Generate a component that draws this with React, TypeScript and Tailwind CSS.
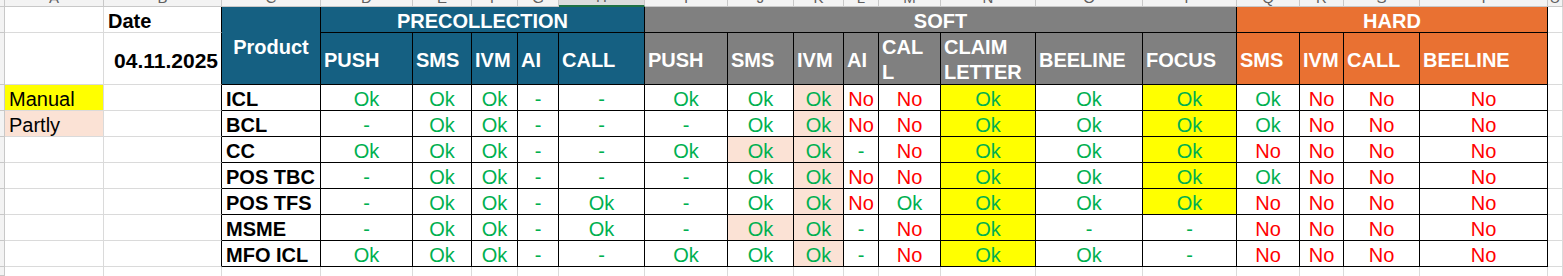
const letters = "ABCDEFGHIJKLMNOPQRSTU".split("");

type Row = { name: string; cells: string[] };

const rows: Row[] = [
  { name: "ICL", cells: ["Ok", "Ok", "Ok", "-", "-", "Ok", "Ok", "Ok", "No", "No", "Ok", "Ok", "Ok", "Ok", "No", "No", "No"] },
  { name: "BCL", cells: ["-", "Ok", "Ok", "-", "-", "-", "Ok", "Ok", "No", "No", "Ok", "Ok", "Ok", "Ok", "No", "No", "No"] },
  { name: "CC", cells: ["Ok", "Ok", "Ok", "-", "-", "Ok", "Ok", "Ok", "-", "No", "Ok", "Ok", "Ok", "No", "No", "No", "No"] },
  { name: "POS TBC", cells: ["-", "Ok", "Ok", "-", "-", "-", "Ok", "Ok", "No", "No", "Ok", "Ok", "Ok", "Ok", "No", "No", "No"] },
  { name: "POS TFS", cells: ["-", "Ok", "Ok", "-", "Ok", "-", "Ok", "Ok", "No", "Ok", "Ok", "Ok", "Ok", "No", "No", "No", "No"] },
  { name: "MSME", cells: ["-", "Ok", "Ok", "-", "Ok", "-", "Ok", "Ok", "-", "No", "Ok", "-", "-", "No", "No", "No", "No"] },
  { name: "MFO ICL", cells: ["Ok", "Ok", "Ok", "-", "-", "Ok", "Ok", "Ok", "-", "No", "Ok", "Ok", "-", "No", "No", "No", "No"] },
];

// sub headers under PRECOLLECTION / SOFT / HARD
const subHeaders: { label: string[]; bg: string }[] = [
  { label: ["PUSH"], bg: "bg-[#156082]" },
  { label: ["SMS"], bg: "bg-[#156082]" },
  { label: ["IVM"], bg: "bg-[#156082]" },
  { label: ["AI"], bg: "bg-[#156082]" },
  { label: ["CALL"], bg: "bg-[#156082]" },
  { label: ["PUSH"], bg: "bg-[#808080]" },
  { label: ["SMS"], bg: "bg-[#808080]" },
  { label: ["IVM"], bg: "bg-[#808080]" },
  { label: ["AI"], bg: "bg-[#808080]" },
  { label: ["CAL", "L"], bg: "bg-[#808080]" },
  { label: ["CLAIM", "LETTER"], bg: "bg-[#808080]" },
  { label: ["BEELINE"], bg: "bg-[#808080]" },
  { label: ["FOCUS"], bg: "bg-[#808080]" },
  { label: ["SMS"], bg: "bg-[#e97132]" },
  { label: ["IVM"], bg: "bg-[#e97132]" },
  { label: ["CALL"], bg: "bg-[#e97132]" },
  { label: ["BEELINE"], bg: "bg-[#e97132]" },
];

const grid = "border-r border-b border-r-[#dadada] border-b-[#dadada]";
const black = "border-r border-b border-r-black border-b-black";
const blackRight = "border-r border-b border-r-black border-b-[#dadada]";
const rowHead = "border-r border-b border-r-[#c8c8c8] border-b-[#c8c8c8] bg-[#f3f3f3]";

const cellBg = (rowIdx: number, colIdx: number, value: string) => {
  if (colIdx === 7) return "bg-[#fbe2d5]";
  if (colIdx === 6 && (rowIdx === 2 || rowIdx === 5)) return "bg-[#fbe2d5]";
  if (colIdx === 10) return "bg-[#ffff00]";
  if (colIdx === 12 && value === "Ok") return "bg-[#ffff00]";
  return "bg-white";
};

const App = () => {
  return (
    <div className="w-[1563px] h-[276px] overflow-hidden bg-white font-['Liberation_Sans',Arial,sans-serif] text-[20px] text-black">
      <div className="grid grid-cols-[5px_99px_118px_99px_92px_59px_46px_41px_86px_83px_66px_50px_35px_62px_95px_107px_94px_63px_44px_76px_128px_15px] grid-rows-[7px_26px_52px_26px_26px_26px_26px_26px_26px_26px_9px]">
        {/* column letters strip */}
        <div className={rowHead} />
        {letters.map((l) => (
          <div
            key={l}
            className={`flex items-end justify-center overflow-hidden pb-[1px] border-r border-r-[#c8c8c8] ${
              l === "H"
                ? "bg-[#dcdcdc] border-b-2 border-b-[#1e7145]"
                : "bg-[#f3f3f3] border-b border-b-[#c8c8c8]"
            }`}
          >
            <span className="text-[15px] leading-none text-[#5f5f5f]">{l}</span>
          </div>
        ))}

        {/* row 1 */}
        <div className={rowHead} />
        <div className={grid} />
        <div className={`${blackRight} flex items-end pl-[4px] font-bold leading-[22px]`}>Date</div>
        <div className={`${black} row-span-2 bg-[#156082] flex items-center justify-center pt-[3px] font-bold text-white leading-[25px]`}>
          Product
        </div>
        <div className={`${black} col-span-5 bg-[#156082] flex items-end justify-center font-bold text-white leading-[22px]`}>
          PRECOLLECTION
        </div>
        <div className={`${black} col-span-8 bg-[#808080] flex items-end justify-center font-bold text-white leading-[22px]`}>
          SOFT
        </div>
        <div className={`${black} col-span-4 bg-[#e97132] flex items-end justify-center font-bold text-white leading-[22px]`}>
          HARD
        </div>
        <div className={grid} />

        {/* row 2 */}
        <div className={rowHead} />
        <div className={grid} />
        <div className={`${blackRight} flex items-center justify-end pt-[3px] pr-[3px] text-[21px] font-bold leading-[25px]`}>
          04.11.2025
        </div>
        {subHeaders.map((h, i) => (
          <div
            key={i}
            className={`${black} ${h.bg} flex items-center pt-[3px] pl-[3px] font-bold text-white leading-[25px] overflow-visible`}
          >
            <div>
              {h.label.map((line) => (
                <div key={line}>{line}</div>
              ))}
            </div>
          </div>
        ))}
        <div className={grid} />

        {/* data rows */}
        {rows.map((r, ri) => (
          <div key={r.name} className="contents">
            <div className={rowHead} />
            <div
              className={`${grid} flex items-end pl-[4px] leading-[22px] ${
                ri === 0 ? "bg-[#ffff00]" : ri === 1 ? "bg-[#fbe2d5]" : ""
              }`}
            >
              {ri === 0 ? "Manual" : ri === 1 ? "Partly" : ""}
            </div>
            <div className={blackRight} />
            <div className={`${black} bg-white flex items-end pl-[4px] font-bold leading-[22px] whitespace-nowrap`}>
              {r.name}
            </div>
            {r.cells.map((v, ci) => (
              <div
                key={ci}
                className={`${black} ${cellBg(ri, ci, v)} flex items-end justify-center leading-[22px] ${
                  v === "No" ? "text-[#ff0000]" : "text-[#00b050]"
                }`}
              >
                {v}
              </div>
            ))}
            <div className={grid} />
          </div>
        ))}

        {/* partial row below */}
        <div className={rowHead} />
        {letters.map((l) => (
          <div key={l} className="border-r border-r-[#dadada]" />
        ))}
      </div>
    </div>
  );
};

export default App;
